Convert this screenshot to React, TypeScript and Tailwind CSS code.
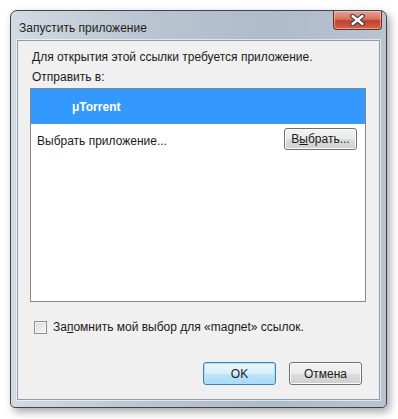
import React from 'react';

const CloseGlyph: React.FC = () => (
  <svg width="15" height="12" viewBox="0 0 15 12">
    <path
      d="M2.5 2 L12.5 10 M12.5 2 L2.5 10"
      stroke="#333a44"
      strokeWidth="4.6"
      strokeLinecap="round"
    />
    <path
      d="M2.5 2 L12.5 10 M12.5 2 L2.5 10"
      stroke="#ffffff"
      strokeWidth="2.4"
      strokeLinecap="round"
    />
  </svg>
);

const WinButton: React.FC<{ children: React.ReactNode; isDefault?: boolean; className?: string }> = ({
  children,
  isDefault,
  className,
}) => (
  <button
    className={
      'flex items-center justify-center rounded-[3px] border text-[12px] text-[#1a1a1a] ' +
      (isDefault
        ? 'border-[#3c7fb1] bg-[linear-gradient(180deg,#eaf6fd_0%,#d9f0fc_50%,#bee6fd_50%,#a7d9f5_100%)] shadow-[inset_0_0_0_1px_#aee0f7]'
        : 'border-[#707070] bg-[linear-gradient(180deg,#f2f2f2_0%,#ebebeb_50%,#dddddd_50%,#cfcfcf_100%)] shadow-[inset_0_0_0_1px_#fcfcfc]') +
      ' ' +
      (className ?? '')
    }
  >
    {children}
  </button>
);

const App: React.FC = () => {
  return (
    <div
      className="h-[419px] w-[398px] overflow-hidden bg-white pl-[10px] pt-[10px]"
      style={{ fontFamily: '"Liberation Sans", Arial, sans-serif' }}
    >
      <div className="flex h-[398px] w-[377px] flex-col rounded-t-[7px] rounded-b-[5px] border border-[#3b4450] bg-[linear-gradient(90deg,#d2dae3_0%,#bac5d1_35%,#aebbc9_70%,#b9c4d0_100%)] shadow-[3px_4px_8px_rgba(0,0,0,0.35)]">
        {/* title bar */}
        <div className="flex h-[29px] shrink-0 items-start justify-between pl-[8px]">
          <span className="mt-[8px] text-[12px] text-[#1e1e1e]">Запустить приложение</span>
          <div className="mr-[4px] flex h-[19px] w-[49px] items-center justify-center rounded-b-[4px] border border-t-0 border-[#6d2a20] bg-[linear-gradient(180deg,#e7a393_0%,#d8705e_45%,#c3402c_55%,#d0644a_100%)] shadow-[inset_0_0_0_1px_rgba(255,220,210,0.5)]">
            <CloseGlyph />
          </div>
        </div>

        {/* client area */}
        <div className="mx-[6px] mb-[7px] flex flex-1 flex-col border border-[#8f9cab] bg-[#f0f0f0] px-[12px] pt-[9px] text-[12px] text-[#1a1a1a] shadow-[0_0_0_1px_rgba(255,255,255,0.6)]">
          <div className="pl-[2px] leading-[15px]">Для открытия этой ссылки требуется приложение.</div>
          <div className="mt-[5px] pl-[2px] leading-[15px]">Отправить в:</div>

          <div className="mt-[3px] flex h-[214px] w-[336px] flex-col border border-[#828790] bg-white">
            <div className="flex h-[35px] items-center bg-[#3399ff] pl-[41px] text-[12px] font-bold text-white">
              μTorrent
            </div>
            <div className="flex h-[30px] items-center justify-between pl-[6px] pr-[8px]">
              <span className="pt-[3px] text-[#1a1a1a]">Выбрать приложение...</span>
              <WinButton className="h-[22px] w-[73px]">
                В<span className="underline">ы</span>брать...
              </WinButton>
            </div>
          </div>

          <label className="mt-[16px] flex items-center pl-[4px]">
            <span className="h-[13px] w-[13px] border border-[#8f8f8f] bg-[linear-gradient(135deg,#dcdcdc_0%,#f6f6f6_100%)] shadow-[inset_0_0_0_1px_#f4f4f4]" />
            <span className="ml-[6px]">
              За<span className="underline">п</span>омнить мой выбор для «magnet» ссылок.
            </span>
          </label>

          <div className="mt-[26px] flex justify-end gap-[13px] pr-[5px]">
            <WinButton isDefault className="h-[23px] w-[73px]">
              OK
            </WinButton>
            <WinButton className="h-[23px] w-[73px]">Отмена</WinButton>
          </div>
        </div>
      </div>
    </div>
  );
};

export default App;
